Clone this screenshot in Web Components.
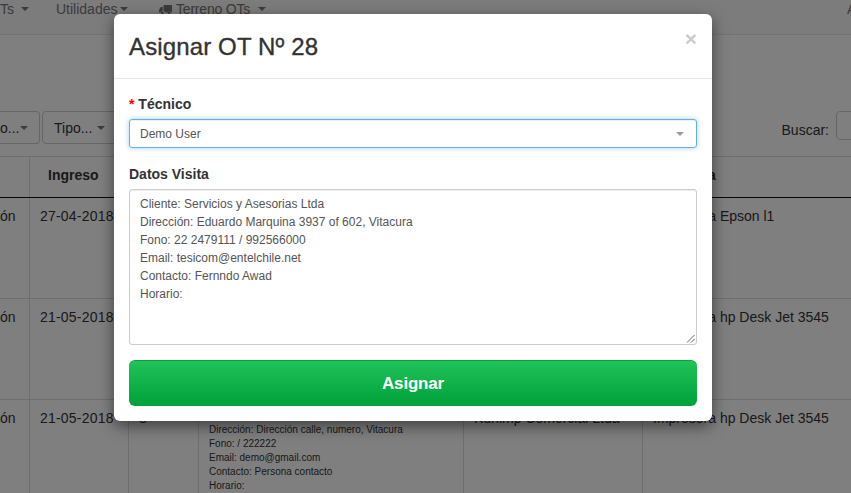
<!DOCTYPE html>
<html lang="es">
<head>
<meta charset="utf-8">
<title>Asignar OT</title>
<style>
html,body{margin:0;padding:0;}
body{width:851px;height:493px;overflow:hidden;background:#fff;font-family:"Liberation Sans",Arial,sans-serif;font-size:14px;color:#333;}
</style>
</head>
<body>
<ot-page>
  <ot-navbar>
    <nav-item caret style="width:56px">Ts</nav-item>
    <nav-item caret style="width:103px;--caret-gap:3px">Utilidades</nav-item>
    <nav-item caret truck style="--caret-gap:8px;letter-spacing:-.2px">Terreno OTs</nav-item>
    <nav-item style="margin-left:auto;width:4px">A</nav-item>
  </ot-navbar>
  <ot-filters>
    <filter-btn style="width:40px">o...</filter-btn>
    <filter-btn style="width:75px;padding-left:11px;border-left-width:1px">Tipo...</filter-btn>
    <search-box slot="right">Buscar:</search-box>
  </ot-filters>
  <ot-table>
    <ot-row head>
      <ot-cell></ot-cell>
      <ot-cell style="padding-left:18px">Ingreso</ot-cell>
      <ot-cell></ot-cell>
      <ot-cell></ot-cell>
      <ot-cell></ot-cell>
      <ot-cell style="padding-left:5px">Impresora</ot-cell>
    </ot-row>
    <ot-row>
      <ot-cell first>ón</ot-cell>
      <ot-cell style="letter-spacing:.2px">27-04-2018</ot-cell>
      <ot-cell></ot-cell>
      <ot-cell></ot-cell>
      <ot-cell></ot-cell>
      <ot-cell>Impresora Epson l1</ot-cell>
    </ot-row>
    <ot-row>
      <ot-cell first>ón</ot-cell>
      <ot-cell style="letter-spacing:.2px">21-05-2018</ot-cell>
      <ot-cell></ot-cell>
      <ot-cell></ot-cell>
      <ot-cell></ot-cell>
      <ot-cell>Impresora hp Desk Jet 3545</ot-cell>
    </ot-row>
    <ot-row>
      <ot-cell first>ón</ot-cell>
      <ot-cell style="letter-spacing:.2px">21-05-2018</ot-cell>
      <ot-cell>8</ot-cell>
      <ot-cell small>Cliente: Kuhlmp Comercial Ltda
Dirección: Dirección calle, numero, Vitacura
Fono: / 222222
Email: demo@gmail.com
Contacto: Persona contacto
Horario:</ot-cell>
      <ot-cell>Kuhlmp Comercial Ltda</ot-cell>
      <ot-cell>Impresora hp Desk Jet 3545</ot-cell>
    </ot-row>
  </ot-table>
  <ot-modal slot="overlay" heading="Asignar OT Nº 28">
    <ot-field required label="Técnico">
      <ot-select>Demo User</ot-select>
    </ot-field>
    <ot-field label="Datos Visita">
      <ot-textarea>Cliente: Servicios y Asesorias Ltda
Dirección: Eduardo Marquina 3937 of 602, Vitacura
Fono: 22 2479111 / 992566000
Email: tesicom@entelchile.net
Contacto: Fernndo Awad
Horario:</ot-textarea>
    </ot-field>
    <ot-button>Asignar</ot-button>
  </ot-modal>
</ot-page>

<script>
// small helper, every element gets its own open shadow root
function shadow(el, html){
    el.attachShadow({mode:'open'}).innerHTML = html;
}

class OtPage extends HTMLElement{
    constructor(){
        super();
        shadow(this, `
        <style>
            :host{display:block;position:relative;width:851px;height:493px;overflow:hidden;}
            .backdrop{position:absolute;inset:0;background:rgba(0,0,0,.5);}
            .dialog{position:absolute;left:114px;top:14px;}
        </style>
        <slot></slot>
        <div class="backdrop"></div>
        <div class="dialog"><slot name="overlay"></slot></div>`);
    }
}

class OtNavbar extends HTMLElement{
    constructor(){
        super();
        shadow(this, `
        <style>
            :host{display:flex;box-sizing:border-box;height:35px;padding-top:1px;background:#f8f8f8;border-bottom:1px solid #e7e7e7;color:#777;}
        </style>
        <slot></slot>`);
    }
}

class NavItem extends HTMLElement{
    constructor(){
        super();
        const truck = this.hasAttribute('truck') ? `
            <svg class="truck" width="13" height="11" viewBox="0 0 13 11">
                <path fill="#777" d="M4.500 1h8.500v7.500h-.8a1.800 1.800 0 0 0-3.300 0h-2.300a1.800 1.800 0 0 0-2.100-1zM3.700 3v4.400a1.800 1.800 0 0 0-1.900 1.100h-1.800v-2.800l1.800-2.700z"/>
                <circle cx="3.400" cy="9.100" r="1.400" fill="#777"/><circle cx="10.100" cy="9.100" r="1.400" fill="#777"/>
            </svg>` : '';
        const caret = this.hasAttribute('caret') ? '<i class="caret"></i>' : '';
        shadow(this, `
        <style>
            :host{display:flex;align-items:center;height:16px;white-space:nowrap;}
            .truck{margin-right:4px;}
            .caret{width:0;height:0;margin-left:var(--caret-gap,7px);border-top:4px solid #777;border-left:4px solid transparent;border-right:4px solid transparent;}
        </style>
        ${truck}<slot></slot>${caret}`);
    }
}

class OtFilters extends HTMLElement{
    constructor(){
        super();
        shadow(this, `
        <style>
            :host{display:flex;justify-content:space-between;align-items:flex-start;height:45px;padding-top:76px;}
            .left{display:flex;gap:2px;}
        </style>
        <div class="left"><slot></slot></div>
        <slot name="right"></slot>`);
    }
}

class FilterBtn extends HTMLElement{
    constructor(){
        super();
        shadow(this, `
        <style>
            :host{display:flex;align-items:center;justify-content:space-between;box-sizing:border-box;height:33px;padding-right:11px;border:1px solid #ccc;border-left-width:0;border-radius:0 4px 4px 0;color:#333;white-space:nowrap;}
            :host([style*="padding-left"]){border-radius:4px;}
            i{flex:none;width:0;height:0;border-top:4px solid #777;border-left:4px solid transparent;border-right:4px solid transparent;}
        </style>
        <slot></slot><i></i>`);
    }
}

class SearchBox extends HTMLElement{
    constructor(){
        super();
        shadow(this, `
        <style>
            :host{display:flex;align-items:flex-start;gap:7px;height:29px;margin-right:-30px;}
            span{padding-top:11px;line-height:16px;}
            i{display:block;box-sizing:border-box;width:45px;height:29px;border:1px solid #ccc;border-radius:4px;background:#fff;}
        </style>
        <span><slot></slot></span><i></i>`);
    }
}

class OtTable extends HTMLElement{
    constructor(){
        super();
        shadow(this, `
        <style>
            :host{display:block;border-top:1px solid #ddd;}
        </style>
        <slot></slot>`);
    }
}

class OtRow extends HTMLElement{
    constructor(){
        super();
        shadow(this, `
        <style>
            :host{display:grid;grid-template-columns:29px 99px 70px 265px 179px 1fr;height:100px;border-bottom:1px solid #ddd;box-sizing:content-box;}
            :host([head]){height:40px;border-bottom-color:#111;font-weight:bold;}
        </style>
        <slot></slot>`);
    }
}

class OtCell extends HTMLElement{
    constructor(){
        super();
        shadow(this, `
        <style>
            :host{display:block;box-sizing:border-box;padding:10px 10px 0 10px;border-left:1px solid #ddd;line-height:16px;color:#333;overflow:hidden;white-space:nowrap;}
            :host([first]){padding-left:0;border-left:0;}
            :host(:first-child){border-left:0;}
            :host([small]){padding-top:9px;font-size:10px;line-height:14px;}
            :host([small]) slot{white-space:pre-line;}
        </style>
        <slot></slot>`);
    }
}

class OtModal extends HTMLElement{
    constructor(){
        super();
        shadow(this, `
        <style>
            :host{display:block;box-sizing:border-box;width:598px;height:407px;background:#fff;border-radius:6px;box-shadow:0 5px 15px rgba(0,0,0,.5);}
            header{display:flex;justify-content:space-between;box-sizing:border-box;height:65px;padding:15px 15px 0;border-bottom:1px solid #e5e5e5;}
            h4{margin:0;font-size:24px;font-weight:normal;line-height:36px;letter-spacing:.13px;color:#333;-webkit-text-stroke:.35px #333;}
            .close{font-size:21px;font-weight:bold;line-height:21px;color:#000;opacity:.2;margin-top:-1px;}
            .body{display:flex;flex-direction:column;padding:15px;}
        </style>
        <header><h4></h4><span class="close">×</span></header>
        <div class="body"><slot></slot></div>`);
        this.shadowRoot.querySelector('h4').textContent = this.getAttribute('heading');
    }
}

class OtField extends HTMLElement{
    constructor(){
        super();
        const star = this.hasAttribute('required') ? '<span class="req">*</span> ' : '';
        shadow(this, `
        <style>
            :host{display:block;margin-bottom:16px;}
            :host(:not([required])){margin-bottom:15px;}
            label{display:block;height:16px;margin-bottom:7px;padding-top:2px;font-weight:bold;line-height:16px;color:#333;}
            .req{color:#f00;}
        </style>
        <label>${star}<span class="txt"></span></label>
        <slot></slot>`);
        this.shadowRoot.querySelector('.txt').textContent = this.getAttribute('label');
    }
}

class OtSelect extends HTMLElement{
    constructor(){
        super();
        shadow(this, `
        <style>
            :host{display:flex;align-items:center;justify-content:space-between;box-sizing:border-box;height:29px;padding:0 12px 0 10px;border:1px solid #66afe9;border-radius:3px;font-size:12px;color:#555;box-shadow:inset 0 1px 1px rgba(0,0,0,.075),0 0 5px rgba(102,175,233,.6);}
            i{width:0;height:0;border-top:4px solid #999;border-left:4px solid transparent;border-right:4px solid transparent;}
        </style>
        <slot></slot><i></i>`);
    }
}

class OtTextarea extends HTMLElement{
    constructor(){
        super();
        shadow(this, `
        <style>
            :host{display:block;position:relative;box-sizing:border-box;height:156px;padding:5px 10px;border:1px solid #ccc;border-radius:3px;font-size:12px;line-height:18px;color:#555;box-shadow:inset 0 1px 1px rgba(0,0,0,.075);}
            slot{white-space:pre-line;}
            svg{position:absolute;right:1px;bottom:1px;}
        </style>
        <slot></slot>
        <svg width="9" height="9" viewBox="0 0 9 9"><path d="M1 8.500L8.500 1M5 8.500L8.500 5" stroke="#666" stroke-width="1" fill="none"/></svg>`);
    }
}

class OtButton extends HTMLElement{
    constructor(){
        super();
        shadow(this, `
        <style>
            :host{display:flex;align-items:center;justify-content:center;box-sizing:border-box;height:46px;border-top:1px solid #0e9b41;border-radius:6px;background:linear-gradient(#20c358,#00a03a);color:#fff;font-size:17px;font-weight:bold;letter-spacing:-.2px;}
        </style>
        <slot></slot>`);
    }
}

customElements.define('ot-page', OtPage);
customElements.define('ot-navbar', OtNavbar);
customElements.define('nav-item', NavItem);
customElements.define('ot-filters', OtFilters);
customElements.define('filter-btn', FilterBtn);
customElements.define('search-box', SearchBox);
customElements.define('ot-table', OtTable);
customElements.define('ot-row', OtRow);
customElements.define('ot-cell', OtCell);
customElements.define('ot-modal', OtModal);
customElements.define('ot-field', OtField);
customElements.define('ot-select', OtSelect);
customElements.define('ot-textarea', OtTextarea);
customElements.define('ot-button', OtButton);
</script>
</body>
</html>
